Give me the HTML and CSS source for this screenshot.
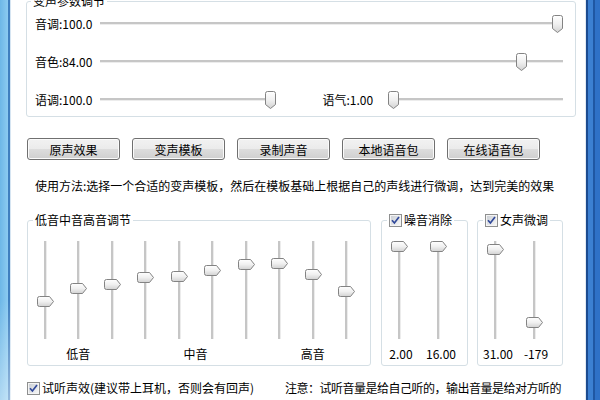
FILE: index.html
```html
<!DOCTYPE html>
<html lang="zh-CN">
<head>
    <meta charset="UTF-8">
    <title>变声器</title>
    <link rel="stylesheet" href="styles.css">
</head>
<body>

    <div class="window">
        <div class="frame-left"></div>

        <div class="panel">

            <!-- 变声参数 -->
            <fieldset class="group group-params">
                <legend>变声参数调节</legend>
                <div class="param-row">
                    <span class="param-label">音调:100.0</span>
                    <div class="hslider"><svg class="hthumb" style="--pos: 1"><use href="#thumb-down"/></svg></div>
                </div>
                <div class="param-row">
                    <span class="param-label">音色:84.00</span>
                    <div class="hslider"><svg class="hthumb" style="--pos: 0.92"><use href="#thumb-down"/></svg></div>
                </div>
                <div class="param-row split">
                    <div class="param-half">
                        <span class="param-label">语调:100.0</span>
                        <div class="hslider"><svg class="hthumb" style="--pos: 1"><use href="#thumb-down"/></svg></div>
                    </div>
                    <div class="param-half">
                        <span class="param-label">语气:1.00</span>
                        <div class="hslider"><svg class="hthumb" style="--pos: 0"><use href="#thumb-down"/></svg></div>
                    </div>
                </div>
            </fieldset>

            <!-- 按钮 -->
            <div class="toolbar">
                <button class="btn">原声效果</button>
                <button class="btn">变声模板</button>
                <button class="btn">录制声音</button>
                <button class="btn">本地语音包</button>
                <button class="btn">在线语音包</button>
            </div>

            <p class="hint">使用方法:选择一个合适的变声模板，然后在模板基础上根据自己的声线进行微调，达到完美的效果</p>

            <div class="groups">
                <!-- 均衡器 -->
                <fieldset class="group group-eq">
                    <legend>低音中音高音调节</legend>
                    <div class="eq-sliders">
                        <div class="vslider"><svg class="vthumb" style="top: 56px"><use href="#thumb-right"/></svg></div>
                        <div class="vslider"><svg class="vthumb" style="top: 43px"><use href="#thumb-right"/></svg></div>
                        <div class="vslider"><svg class="vthumb" style="top: 39px"><use href="#thumb-right"/></svg></div>
                        <div class="vslider"><svg class="vthumb" style="top: 32px"><use href="#thumb-right"/></svg></div>
                        <div class="vslider"><svg class="vthumb" style="top: 31px"><use href="#thumb-right"/></svg></div>
                        <div class="vslider"><svg class="vthumb" style="top: 25px"><use href="#thumb-right"/></svg></div>
                        <div class="vslider"><svg class="vthumb" style="top: 19px"><use href="#thumb-right"/></svg></div>
                        <div class="vslider"><svg class="vthumb" style="top: 18px"><use href="#thumb-right"/></svg></div>
                        <div class="vslider"><svg class="vthumb" style="top: 29px"><use href="#thumb-right"/></svg></div>
                        <div class="vslider"><svg class="vthumb" style="top: 46px"><use href="#thumb-right"/></svg></div>
                    </div>
                    <div class="eq-labels">
                        <span class="eq-low">低音</span>
                        <span class="eq-mid">中音</span>
                        <span class="eq-high">高音</span>
                    </div>
                </fieldset>

                <!-- 噪音消除 -->
                <fieldset class="group group-small group-noise">
                    <legend>
                        <label class="check-label"><svg class="check"><use href="#checkbox"/></svg>噪音消除</label>
                    </legend>
                    <div class="pair">
                        <div class="vslider"><svg class="vthumb" style="top: 1px"><use href="#thumb-right"/></svg></div>
                        <div class="vslider"><svg class="vthumb" style="top: 1px"><use href="#thumb-right"/></svg></div>
                        <span class="value">2.00</span>
                        <span class="value">16.00</span>
                    </div>
                </fieldset>

                <!-- 女声微调 -->
                <fieldset class="group group-small group-female">
                    <legend>
                        <label class="check-label"><svg class="check"><use href="#checkbox"/></svg>女声微调</label>
                    </legend>
                    <div class="pair">
                        <div class="vslider"><svg class="vthumb" style="top: 4px"><use href="#thumb-right"/></svg></div>
                        <div class="vslider"><svg class="vthumb" style="top: 77px"><use href="#thumb-right"/></svg></div>
                        <span class="value">31.00</span>
                        <span class="value">-179</span>
                    </div>
                </fieldset>
            </div>

            <div class="listen">
                <label class="check-label listen-check"><svg class="check"><use href="#checkbox"/></svg>试听声效(建议带上耳机，否则会有回声)</label>
                <span class="note">注意：试听音量是给自己听的，输出音量是给对方听的</span>
            </div>

        </div>

        <div class="frame-right"></div>
    </div>

    <!-- 共用图形 -->
    <svg class="sprite" width="0" height="0">
        <defs>
            <linearGradient id="thumb-fill" x1="0" y1="0" x2="0" y2="1">
                <stop offset="0" stop-color="#ffffff"/>
                <stop offset="0.5" stop-color="#f0f0f0"/>
                <stop offset="1" stop-color="#d2d2d2"/>
            </linearGradient>
            <linearGradient id="check-fill" x1="0" y1="0" x2="1" y2="1">
                <stop offset="0" stop-color="#cbcfd5"/>
                <stop offset="1" stop-color="#f6f6f6"/>
            </linearGradient>
            <symbol id="thumb-down" viewBox="0 0 11 18">
                <path d="M0.5 2.5 Q0.5 0.5 2.5 0.5 H8.5 Q10.5 0.5 10.5 2.5 V13.5 L5.5 17.5 L0.5 13.5 Z" fill="url(#thumb-fill)" stroke="#838383"/>
            </symbol>
            <symbol id="thumb-right" viewBox="0 0 17 11">
                <path d="M0.5 2.5 Q0.5 0.5 2.5 0.5 H12.5 L16.5 5.5 L12.5 10.5 H2.5 Q0.5 10.5 0.5 8.5 Z" fill="url(#thumb-fill)" stroke="#838383"/>
            </symbol>
            <symbol id="checkbox" viewBox="0 0 13 13">
                <rect x="0.5" y="0.5" width="12" height="12" fill="#f4f4f4" stroke="#8e8f8f"/>
                <rect x="2" y="2" width="9" height="9" fill="url(#check-fill)"/>
                <path d="M3 6.3 L5.4 9 L10 3" fill="none" stroke="#30489a" stroke-width="1.7"/>
            </symbol>
        </defs>
    </svg>

</body>
</html>
```

FILE: styles.css
```css
* {
    box-sizing: border-box;
}

body {
    margin: 0;
    font-family: "Noto Sans CJK SC", "Noto Sans", sans-serif;
    font-size: 12px;
    color: #000;
    background: #fff;
    overflow: hidden;
}

/* Bingkai jendela */
.window {
    display: flex;
    height: 400px;
    overflow: hidden;
}

.frame-left {
    width: 11px;
    flex-shrink: 0;
    background:
        linear-gradient(to bottom, rgba(255, 255, 255, 0) 75%, rgba(255, 255, 255, 0.45) 100%),
        linear-gradient(to right, #6db7e7 0, #8ccbf1 8px, #3f7fbf 8px, #3f7fbf 10px, #d6e5f2 10px);
}

.frame-right {
    width: 15px;
    flex-shrink: 0;
    background: linear-gradient(to right,
        #e3eaf1 0, #e3eaf1 1px,
        #1b4b8f 1px, #1b4b8f 3px,
        #3c80d2 3px, #3c80d2 8px,
        #1f57a3 8px, #1f57a3 10px,
        #2f71c7 10px);
}

.panel {
    flex: 1;
    min-width: 0;
    display: flex;
    flex-direction: column;
    padding: 0 9px 0 15px;
}

.sprite {
    display: block;
    width: 0;
    height: 0;
}

/* Kotak grup */
.group {
    margin: 0;
    padding: 0;
    min-width: 0;
    border: 1px solid #d5dfe5;
    border-radius: 3px;
}

.group legend {
    margin-left: 5px;
    padding: 0 2px;
    line-height: 14px;
}

.group-params {
    margin-top: -6px;
    padding: 7px 12px 7px 8px;
    display: flex;
    flex-direction: column;
    gap: 20px;
}

.group-params legend {
    margin-left: -4px;
}

.param-row {
    display: flex;
    align-items: center;
    height: 18px;
}

.param-row.split {
    gap: 47px;
}

.param-half {
    flex: 1;
    display: flex;
    align-items: center;
}

.param-label {
    width: 65px;
    flex-shrink: 0;
    white-space: nowrap;
    line-height: 14px;
}

/* Slider horizontal */
.hslider {
    position: relative;
    flex: 1;
    height: 18px;
}

.hslider::before {
    content: "";
    position: absolute;
    left: 0;
    right: 0;
    top: 7px;
    height: 2px;
    background: #c6c6c6;
    border-bottom: 1px solid #ececec;
    box-sizing: content-box;
}

.hthumb {
    position: absolute;
    top: 0;
    left: calc((100% - 11px) * var(--pos));
    width: 11px;
    height: 18px;
}

/* Tombol */
.toolbar {
    display: flex;
    gap: 12px;
    margin-top: 21px;
    padding-left: 1px;
}

.btn {
    width: 93px;
    height: 22px;
    padding: 0;
    font-family: inherit;
    font-size: 12px;
    color: #000;
    border: 1px solid #707070;
    border-radius: 3px;
    background: linear-gradient(to bottom, #f2f2f2 0%, #ebebeb 50%, #dddddd 50%, #cfcfcf 100%);
    box-shadow: inset 0 0 0 1px #fbfbfb;
}

.hint {
    margin: 19px 0 0 9px;
    line-height: 14px;
    white-space: nowrap;
}

/* Grup bawah */
.groups {
    display: flex;
    align-items: flex-start;
    margin-top: 20px;
    padding-left: 1px;
}

.group-eq {
    width: 344px;
    padding: 13px 0 4px 0;
}

.eq-sliders,
.eq-labels {
    display: grid;
    grid-template-columns: repeat(10, 33.5px);
}

.eq-labels {
    margin-top: 7px;
    line-height: 14px;
    text-align: center;
}

.eq-low {
    grid-column: 1 / 4;
}

.eq-mid {
    grid-column: 4 / 8;
}

.eq-high {
    grid-column: 8 / 11;
}

.group-small {
    padding: 13px 0 4px 0;
}

.group-noise {
    width: 87px;
    margin-left: 10px;
}

.group-female {
    width: 86px;
    margin-left: 9px;
}

.pair {
    display: grid;
    grid-template-columns: 33px 33px;
    column-gap: 6px;
    row-gap: 7px;
}

.value {
    text-align: center;
    line-height: 14px;
    padding-left: 5px;
    white-space: nowrap;
}

/* Slider vertikal */
.vslider {
    position: relative;
    height: 100px;
}

.vslider::before {
    content: "";
    position: absolute;
    top: 1px;
    bottom: 1px;
    left: calc(50% - 1px);
    width: 2px;
    background: #c6c6c6;
    border-right: 1px solid #ececec;
    box-sizing: content-box;
}

.vthumb {
    position: absolute;
    left: calc(50% - 8px);
    width: 17px;
    height: 11px;
}

/* Kotak centang */
.check-label {
    display: flex;
    align-items: center;
    gap: 2px;
    line-height: 14px;
    white-space: nowrap;
}

.check {
    width: 13px;
    height: 13px;
    flex-shrink: 0;
}

.listen {
    display: flex;
    align-items: center;
    margin-top: 15px;
    padding-left: 1px;
    line-height: 14px;
}

.listen-check {
    flex: 0 0 258px;
}

.note {
    white-space: nowrap;
    letter-spacing: -0.5px;
}
```
